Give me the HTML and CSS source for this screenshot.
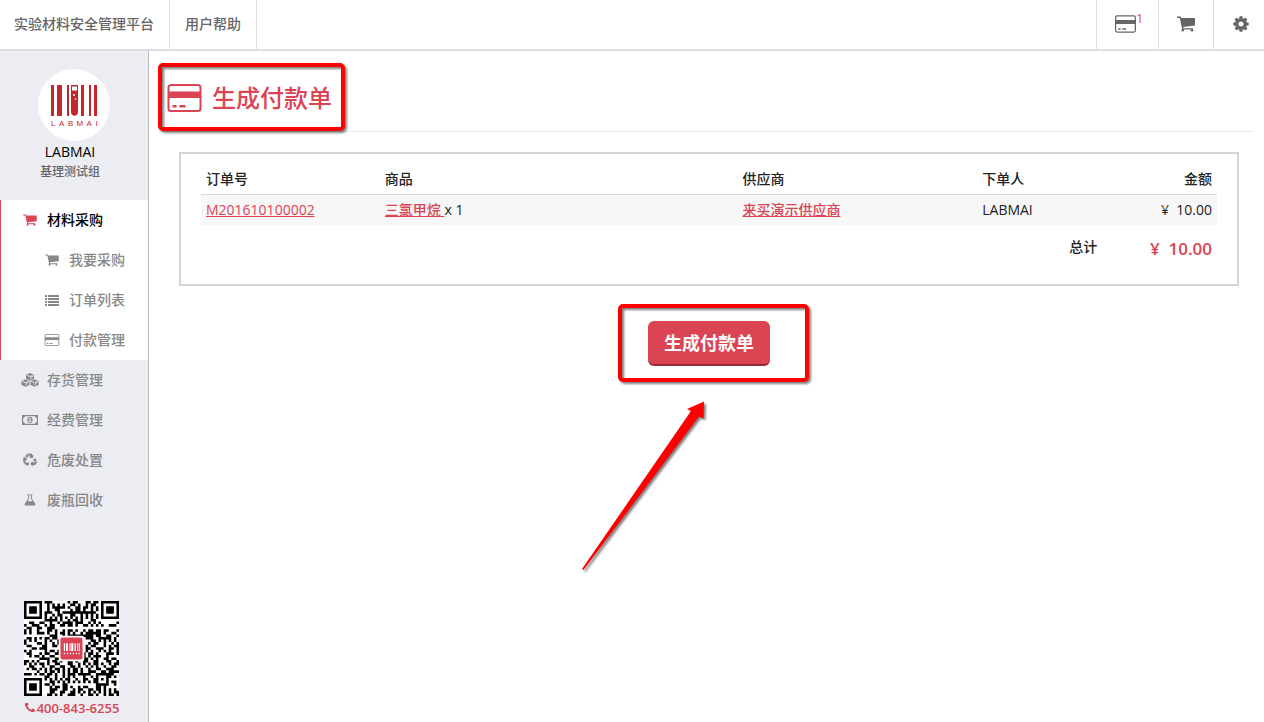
FILE: index.html
```html
<!DOCTYPE html>
<html lang="zh-CN">
<head>
    <meta charset="UTF-8">
    <meta name="viewport" content="width=device-width, initial-scale=1.0">
    <title>生成付款单</title>
    <link rel="stylesheet" href="styles.css">
</head>
<body>
    <!-- icons -->
    <svg class="sprite" aria-hidden="true">
        <symbol id="i-card" viewBox="0 0 34 28">
            <rect x="1" y="1" width="32" height="26" rx="2.5" fill="none" stroke="currentColor" stroke-width="2"/>
            <path fill="currentColor" d="M1 7.500h32v6.500H1zM5 21h4v2.500H5zM12 21h6v2.500h-6z"/>
        </symbol>
        <symbol id="i-cart" viewBox="0 0 18 16">
            <path fill="currentColor" d="M0 .5h3.600l.7 1.500H18v7.500L6.200 11l.3 1.300H16v1.200H5.200L2.800 2H0z"/>
            <circle cx="5.700" cy="14.300" r="1.300" fill="currentColor"/>
            <circle cx="15" cy="14.300" r="1.300" fill="currentColor"/>
        </symbol>
        <symbol id="i-cog" viewBox="0 0 1792 1792">
            <path fill="currentColor" d="M1152 896q0-106-75-181t-181-75-181 75-75 181 75 181 181 75 181-75 75-181zm512-109v222q0 12-8 23t-20 13l-185 28q-19 54-39 91 35 50 107 138 10 12 10 25t-9 23q-27 37-99 108t-94 71q-12 0-26-9l-138-108q-44 23-91 38-16 136-29 186-7 28-36 28h-222q-14 0-24.500-8.500t-11.500-21.500l-28-184q-49-16-90-37l-141 107q-10 9-25 9-14 0-25-11-126-114-165-168-7-10-7-23 0-12 8-23 15-21 51-66.500t54-70.500q-27-50-41-99l-183-27q-13-2-21-12.500t-8-23.500v-222q0-12 8-23t19-13l186-28q14-46 39-92-40-57-107-138-10-12-10-24 0-10 9-23 26-36 98.500-107.500t94.500-71.500q13 0 26 10l138 107q44-23 91-38 16-136 29-186 7-28 36-28h222q14 0 24.500 8.500t11.500 21.500l28 184q49 16 90 37l142-107q9-9 24-9 13 0 25 10 129 119 165 170 7 8 7 22 0 12-8 23-15 21-51 66.500t-54 70.500q26 50 41 98l183 28q13 2 21 12.500t8 23.500z"/>
        </symbol>
        <symbol id="i-list" viewBox="0 0 14 12">
            <path fill="currentColor" d="M0 1h2v2H0zM3 1h11v2H3zM0 4h2v2H0zM3 4h11v2H3zM0 7h2v2H0zM3 7h11v2H3zM0 10h2v2H0zM3 10h11v2H3z"/>
        </symbol>
        <symbol id="i-cubes" viewBox="0 0 18 14">
            <g fill="currentColor">
                <path d="M9 0l4 1.700v4.100L9 7.500 5 5.800V1.700z"/>
                <path d="M4.500 6.200l4 1.700v4.100l-4 1.800-4-1.800V7.900z"/>
                <path d="M13.500 6.200l4 1.700v4.100l-4 1.800-4-1.800V7.900z"/>
            </g>
            <g fill="none" stroke="#ecedf3" stroke-width=".9">
                <path d="M5.800 2.200L9 3.500l3.200-1.300M9.800 6.300V4.100l2.400-1M1.300 8.400l3.200 1.300 3.200-1.300M5.200 12.500v-2.300l2.500-1M10.300 8.400l3.200 1.300 3.200-1.300M14.200 12.500v-2.300l2.500-1"/>
            </g>
        </symbol>
        <symbol id="i-money" viewBox="0 0 16 12">
            <path fill="currentColor" fill-rule="evenodd" d="M0 1h16v10H0zM3 2.200A2 2 0 0 1 1.200 4v4A2 2 0 0 1 3 9.800h10A2 2 0 0 1 14.800 8V4A2 2 0 0 1 13 2.200z"/>
            <path fill="currentColor" fill-rule="evenodd" d="M8 3c1.800 0 2.700 1.300 2.700 3S9.800 9 8 9 5.300 7.700 5.300 6 6.200 3 8 3zM7.500 4.200l-1 .8v.6h.9v1.600h-.8V8h2.800v-.8h-.8v-3z"/>
        </symbol>
        <symbol id="i-recycle" viewBox="0 0 16 15">
            <g fill="currentColor">
                <path d="M5 .6h4.200c.5 0 .8.3 1 .7l.9 1.500 1-.5-1.300 3.400-3.700-.5 1.100-.7-1.700-3z"/>
                <path d="M4.400 1.100L6.900 2.500 5.500 5 3 3.600z"/>
                <path d="M0 5.100l3.700-.5 1.400 3.300-1.100-.6-1.300 2.200 1 2.700c-.8 0-1.500-.3-1.900-1L.5 8.800c-.2-.5-.2-.9.100-1.400l.6-1.200z"/>
                <path d="M3.300 10.100h3.600V13H4.200c-.9 0-1.300-.6-1.300-1.400z"/>
                <path d="M8.400 11.600l2.300-3v1.300h2.100l2.700-1.400c.3.700.2 1.400-.2 2L14 12.400c-.3.400-.7.600-1.200.6h-2.100v1.500z"/>
                <path d="M11.300 6.900L13.700 5.500l1.500 2.400-2.500 1.400z"/>
            </g>
        </symbol>
        <symbol id="i-flask" viewBox="0 0 14 14">
            <path fill="currentColor" fill-rule="evenodd" d="M4 .5h6v1H9.200v3.700l3.900 6.300c.6 1 .1 2-1.100 2H2c-1.200 0-1.700-1-1.100-2l3.900-6.300V1.500H4zm1.900 1v4L4.100 8.500h5.800L8.100 5.500v-4z"/>
        </symbol>
        <symbol id="i-phone" viewBox="192 256 1408 1408">
            <path fill="currentColor" d="M1600 1240q0 27-10 70.500t-21 68.500q-21 50-122 106-94 51-186 51-27 0-53-3.500t-57.500-12.500-47-14.500-55.500-20.500-49-18q-98-35-175-83-127-79-264-216t-216-264q-48-77-83-175-3-9-18-49t-20.500-55.500-14.500-47-12.500-57.500-3.500-53q0-92 51-186 56-101 106-122 25-11 68.500-21t70.500-10q14 0 21 3 18 6 53 76 11 19 30 54t35 63.500 31 53.500q3 4 17.500 25t21.500 35.500 7 28.500q0 20-28.500 50t-62 55-62 53-28.500 46q0 9 5 22.500t8.500 20.500 14 24 11.500 19q76 137 174 235t235 174q2 1 19 11.500t24 14 20.500 8.500 22.500 5q18 0 46-28.500t53-62 55-62 50-28.500q14 0 28.500 7t35.500 21.500 25 17.500q25 15 53.500 31t63.500 35 54 30q70 35 76 53 3 7 3 21z"/>
        </symbol>
    </svg>

    <header class="topbar">
        <a class="brand" href="#">实验材料安全管理平台</a>
        <a class="help" href="#">用户帮助</a>
        <nav class="tools">
            <a class="tool" href="#" aria-label="付款单"><svg class="ico-pay"><use href="#i-card"/></svg><sup>1</sup></a>
            <a class="tool" href="#" aria-label="购物车"><svg class="ico-cart"><use href="#i-cart"/></svg></a>
            <a class="tool" href="#" aria-label="设置"><svg class="ico-cog"><use href="#i-cog"/></svg></a>
        </nav>
    </header>

    <div class="layout">
        <aside class="sidebar">
            <div class="user">
                <svg class="avatar" viewBox="0 0 72 72" role="img" aria-label="LABMAI">
                    <circle cx="36" cy="36" r="36" fill="#fff"/>
                    <g fill="#c1272d">
                        <path d="M13 16h3v31h-3zM19 16h5v31h-5zM29 16h2v31h-2zM43 16h3v31h-3zM51 16h2v31h-2zM56 16h3v31h-3z"/>
                        <path fill-rule="evenodd" d="M33 16h7v27c0 5-7 5-7 0zM34 17.500v4h5v-4z"/>
                    </g>
                    <circle cx="36" cy="26" r="1" fill="#fff"/>
                    <circle cx="37.500" cy="30" r=".8" fill="#fff"/>
                    <text class="avatar-text" y="57" x="13 21 30 38.500 48.500 57.500">LABMAI</text>
                </svg>
                <div class="user-name">LABMAI</div>
                <div class="user-group">基理测试组</div>
            </div>

            <nav class="menu">
                <div class="menu-open">
                    <a class="item current" href="#"><svg class="ico"><use href="#i-cart"/></svg>材料采购</a>
                    <a class="item sub" href="#"><svg class="ico"><use href="#i-cart"/></svg>我要采购</a>
                    <a class="item sub" href="#"><svg class="ico"><use href="#i-list"/></svg>订单列表</a>
                    <a class="item sub" href="#"><svg class="ico"><use href="#i-card"/></svg>付款管理</a>
                </div>
                <a class="item" href="#"><svg class="ico tall"><use href="#i-cubes"/></svg>存货管理</a>
                <a class="item" href="#"><svg class="ico"><use href="#i-money"/></svg>经费管理</a>
                <a class="item" href="#"><svg class="ico tall"><use href="#i-recycle"/></svg>危废处置</a>
                <a class="item" href="#"><svg class="ico"><use href="#i-flask"/></svg>废瓶回收</a>
            </nav>

            <div class="contact">
                <svg class="qr" viewBox="0 0 37 37" role="img" aria-label="二维码">
                    <rect width="37" height="37" fill="#fff"/>
                    <path id="qr-modules" fill="#000"/>
                    <rect x="13.500" y="13.500" width="10" height="10" rx="1" fill="#fff"/>
                    <rect x="14.200" y="14.200" width="8.600" height="8.600" rx=".8" fill="#da4453"/>
                    <path fill="#fff" d="M15.500 16.500h.5v3h-.5zM16.400 16.500h.7v3h-.7zM17.700 16.500h.4v3h-.4zM18.400 16.500h.8v3h-.8zM19.700 16.500h.5v3h-.5zM20.700 16.500h.3v3h-.3zM21.300 16.500h.4v3h-.4zM15.500 20.200h.5v.5h-.5zM16.700 20.200h.5v.5h-.5zM17.900 20.200h.5v.5h-.5zM19 20.200h.5v.5h-.5zM20.200 20.200h.5v.5h-.5zM21.300 20.200h.4v.5h-.4z"/>
                </svg>
                <a class="phone" href="tel:400-843-6255"><svg class="ico-phone"><use href="#i-phone"/></svg>400-843-6255</a>
            </div>
        </aside>

        <main class="content">
            <h1 class="title">
                <svg class="ico-title"><use href="#i-card"/></svg>生成付款单
                <span class="mark mark-title"></span>
            </h1>

            <section class="panel">
                <table class="orders">
                    <colgroup>
                        <col class="c-no"><col class="c-goods"><col class="c-vendor"><col class="c-buyer"><col class="c-price">
                    </colgroup>
                    <thead>
                        <tr>
                            <th>订单号</th>
                            <th>商品</th>
                            <th>供应商</th>
                            <th>下单人</th>
                            <th class="num">金额</th>
                        </tr>
                    </thead>
                    <tbody>
                        <tr>
                            <td><a href="#">M201610100002</a></td>
                            <td><a href="#">三氯甲烷&nbsp;</a>x 1</td>
                            <td><a href="#">来买演示供应商</a></td>
                            <td>LABMAI</td>
                            <td class="num">¥&nbsp; 10.00</td>
                        </tr>
                    </tbody>
                    <tfoot>
                        <tr>
                            <td class="num" colspan="4">总计</td>
                            <td class="num total">¥&nbsp; 10.00</td>
                        </tr>
                    </tfoot>
                </table>
            </section>

            <div class="actions">
                <div class="submit">
                    <button class="btn" type="button">生成付款单</button>
                    <span class="mark mark-btn"></span>
                    <svg class="arrow" viewBox="0 0 130 176">
                        <path fill="#f00" d="M0 168L109 10l-4-2L122 0.500l-.5 17-4.500-2L1.500 169z"/>
                    </svg>
                </div>
            </div>
        </main>
    </div>

    <script src="script.js"></script>
</body>
</html>
```

FILE: styles.css
```css
* {
    margin: 0;
    padding: 0;
    box-sizing: border-box;
}

body {
    display: flex;
    flex-direction: column;
    min-height: 100vh;
    font-family: "Open Sans", "Noto Sans CJK SC", sans-serif;
    font-size: 14px;
    line-height: 20px;
    color: #222;
    background: #fff;
}

a {
    color: #da4453;
}

.sprite {
    position: absolute;
    width: 0;
    height: 0;
}

/* top bar */
.topbar {
    display: flex;
    height: 51px;
    border-bottom: 2px solid #dcdce3;
}

.topbar a {
    display: flex;
    align-items: center;
    padding-bottom: 2px;
    color: #666;
    font-weight: 500;
    text-decoration: none;
}

.brand,
.help {
    padding: 0 15px;
    border-right: 1px solid #dcdce3;
}

.brand {
    padding-left: 14px;
}

.tools {
    display: flex;
    margin-left: auto;
}

.tool {
    padding: 0 15px 0 18px;
    border-left: 1px solid #dcdce3;
}

.topbar sup {
    align-self: flex-start;
    margin-top: 9px;
    font-size: 12px;
    font-weight: 400;
    color: #da4453;
}

.ico-pay {
    width: 21px;
    height: 18px;
}

.ico-cart {
    width: 18px;
    height: 16px;
    margin-right: 3px;
}

.ico-cog {
    width: 18px;
    height: 18px;
    margin-right: -1px;
}

/* sidebar */
.layout {
    display: flex;
    flex: 1;
}

.sidebar {
    display: flex;
    flex-direction: column;
    flex: 0 0 149px;
    background: #ecedf3;
    border-right: 1px solid #bbb;
}

.user {
    padding: 18px 0;
    text-align: center;
}

.avatar {
    display: block;
    width: 72px;
    height: 72px;
    margin: 0 auto;
}

.avatar-text {
    font-family: "Liberation Sans", sans-serif;
    font-size: 8px;
    fill: #c1272d;
}

.user-name,
.user-group {
    padding-right: 8px;
    font-weight: 500;
}

.user-name {
    margin-top: 1px;
    color: #000;
}

.user-group {
    font-size: 12px;
    color: #666;
}

.menu-open {
    background: #fff;
    box-shadow: inset 1px 0 #da4453;
}

.item {
    display: flex;
    align-items: center;
    height: 40px;
    padding-left: 20px;
    color: #888;
    font-weight: 500;
    text-decoration: none;
}

.item.sub {
    padding-left: 42px;
}

.item.current {
    color: #000;
}

.ico {
    width: 20px;
    height: 12px;
    margin-right: 7px;
}

.ico.tall {
    height: 14px;
}

.current .ico {
    color: #da4453;
}

.contact {
    margin-top: auto;
    padding: 20px 6px 4px 0;
    text-align: center;
}

.qr {
    display: block;
    width: 95px;
    height: 95px;
    margin: 0 auto;
}

.phone {
    display: flex;
    justify-content: center;
    align-items: center;
    gap: 2px;
    margin-top: 2px;
    padding-left: 2px;
    font-size: 13px;
    font-weight: 600;
    text-decoration: none;
}

.ico-phone {
    width: 10px;
    height: 10px;
}

/* content */
.content {
    flex: 1;
    padding: 0 10px;
}

.title {
    position: relative;
    display: flex;
    align-items: center;
    gap: 10px;
    height: 81px;
    padding: 14px 8px 0;
    border-bottom: 1px solid #e8e8e8;
    font-size: 24px;
    font-weight: 500;
    line-height: 32px;
    color: #da4453;
}

.ico-title {
    width: 35px;
    height: 28px;
}

.panel {
    margin: 20px 15px 0 20px;
    padding: 10px 20px;
    border: 2px solid #d5d5d5;
}

.orders {
    width: 100%;
    table-layout: fixed;
    border-collapse: collapse;
}

.c-no { width: 17.6%; }
.c-goods { width: 35.2%; }
.c-vendor { width: 23.6%; }
.c-buyer { width: 12.3%; }
.c-price { width: 11.3%; }

.orders th,
.orders td {
    padding: 5px;
    text-align: left;
    font-weight: 500;
}

.orders th {
    border-bottom: 1px solid #d5d5d5;
}

.orders tbody tr {
    background: #f7f7f7;
}

.orders .num {
    text-align: right;
}

.orders tfoot td {
    height: 49px;
    padding-top: 12px;
    vertical-align: top;
}

.orders tfoot .total {
    padding-top: 14px;
    font-size: 17px;
    font-weight: 600;
    color: #da4453;
}

.actions {
    display: flex;
    justify-content: center;
    padding: 35px 15px 0 20px;
}

.submit {
    position: relative;
}

.btn {
    display: block;
    height: 45px;
    padding: 0 16px;
    border: 0;
    border-bottom: 2px solid #952a36;
    border-radius: 6px;
    background: #da4453;
    color: #fff;
    font: 700 18px/24px "Open Sans", "Noto Sans CJK SC", sans-serif;
    cursor: pointer;
}

/* callouts drawn over the page */
.mark {
    position: absolute;
    border: 4px solid #f00;
    border-radius: 5px;
    filter: drop-shadow(2px 2px 1px rgba(0, 0, 0, 0.5));
    pointer-events: none;
}

.mark-title {
    top: 12px;
    left: -1px;
    width: 187px;
    height: 68px;
}

.mark-btn {
    top: -17px;
    right: -39px;
    bottom: -16px;
    left: -30px;
}

.arrow {
    position: absolute;
    top: 80px;
    left: -66px;
    width: 130px;
    height: 176px;
    filter: drop-shadow(2px 2px 1px rgba(0, 0, 0, 0.5));
    pointer-events: none;
}
```

FILE: script.js
```js
document.addEventListener('DOMContentLoaded', () => {
    const size = 37;
    let seed = 20161010;
    let d = '';

    // square rings: dark border, light gap, dark centre
    function ring(x, y, cx, cy, radius) {
        const dist = Math.max(Math.abs(x - cx), Math.abs(y - cy));
        if (dist > radius + 1) return null;
        if (dist === radius + 1) return radius === 3 ? false : null;
        return dist !== radius - 1;
    }

    for (let y = 0; y < size; y++) {
        for (let x = 0; x < size; x++) {
            seed = (seed * 1103515245 + 12345) % 2147483648;
            let dark = (seed >> 12) % 2 === 0;
            if (x === 6) dark = y % 2 === 0;
            if (y === 6) dark = x % 2 === 0;
            [[3, 3, 3], [33, 3, 3], [3, 33, 3], [30, 30, 2]].forEach(([cx, cy, r]) => {
                const value = ring(x, y, cx, cy, r);
                if (value !== null) dark = value;
            });
            if (dark) d += `M${x} ${y}h1v1h-1z`;
        }
    }

    document.getElementById('qr-modules').setAttribute('d', d);
});
```
